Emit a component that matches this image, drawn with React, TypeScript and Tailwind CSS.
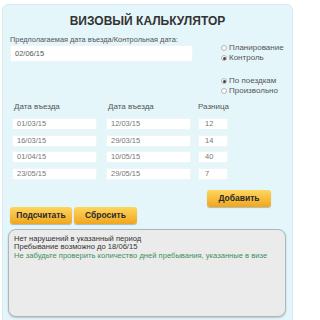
import React from "react";

type Trip = { from: string; to: string; diff: string };

const trips: Trip[] = [
    { from: "01/03/15", to: "12/03/15", diff: "12" },
    { from: "16/03/15", to: "29/03/15", diff: "14" },
    { from: "01/04/15", to: "10/05/15", diff: "40" },
    { from: "23/05/15", to: "29/05/15", diff: "7" },
];

function Radio({ label, checked }: { label: string; checked?: boolean }) {
    return (
        <div className="flex items-center h-[10px] gap-[2px]">
            <span className="w-[6px] h-[6px] rounded-full border border-[#b5b5b5] bg-white flex items-center justify-center">
                {checked && <span className="w-[3px] h-[3px] rounded-full bg-[#444]" />}
            </span>
            <span className="text-[8px] leading-[10px] text-[#555]">{label}</span>
        </div>
    );
}

function Field({ value, className }: { value: string; className: string }) {
    return (
        <div className={`h-[12px] bg-white border border-[#edf5f6] text-[7.5px] leading-[10px] text-[#777] ${className}`}>
            {value}
        </div>
    );
}

function YellowButton({ label, className }: { label: string; className: string }) {
    return (
        <button className={`rounded-[3px] bg-gradient-to-b from-[#fdd65c] to-[#f0a619] shadow-[0_1px_1px_rgba(0,0,0,0.25)] text-[8.5px] font-bold text-[#2b2b2b] ${className}`}>
            {label}
        </button>
    );
}

export default function App() {
    return (
        <div className="w-[298px] h-[320px] bg-white overflow-hidden pt-[4px] pl-[2px]" style={{ fontFamily: '"Liberation Sans", Arial, sans-serif' }}>
            <div className="w-[291px] h-[330px] rounded-[6px] bg-[#e4f6fa] border border-[#d8ecef] pt-[10px]">
                <h1 className="text-center text-[12px] leading-[12px] font-bold text-[#333]">ВИЗОВЫЙ КАЛЬКУЛЯТОР</h1>

                <div className="flex mt-[8px]">
                    <div className="ml-[7px] w-[183px]">
                        <div className="text-[7.4px] leading-[10px] text-[#555] whitespace-nowrap">Предполагаемая дата въезда/Контрольная дата:</div>
                        <div className="h-[17px] bg-white border border-[#edf5f6] text-[7.5px] leading-[15px] text-[#555] pl-[4px]">02/06/15</div>
                    </div>
                    <div className="ml-[28px] pt-[8px] flex flex-col">
                        <Radio label="Планирование" />
                        <Radio label="Контроль" checked />
                        <div className="h-[13px]" />
                        <Radio label="По поездкам" checked />
                        <Radio label="Произвольно" />
                    </div>
                </div>

                <div className="flex ml-[9px] mt-[6px] text-[8px] leading-[10px] text-[#555]">
                    <div className="w-[85px] pl-[2px]">Дата въезда</div>
                    <div className="w-[85px] ml-[9px] pl-[2px]">Дата въезда</div>
                    <div className="w-[30px] ml-[7px]">Разница</div>
                </div>

                <div className="flex flex-col gap-[4.5px] ml-[9px] mt-[6px]">
                    {trips.map((t) => (
                        <div key={t.from} className="flex">
                            <Field value={t.from} className="w-[85px] pl-[4px]" />
                            <Field value={t.to} className="w-[85px] ml-[9px] pl-[4px]" />
                            <Field value={t.diff} className="w-[30px] ml-[7px] pl-[6px]" />
                        </div>
                    ))}
                </div>

                <div className="flex justify-end pr-[21px] mt-[10px]">
                    <YellowButton label="Добавить" className="w-[64px] h-[17px]" />
                </div>

                <div className="flex gap-[2px] ml-[7px]">
                    <YellowButton label="Подсчитать" className="w-[62px] h-[17px]" />
                    <YellowButton label="Сбросить" className="w-[63px] h-[17px]" />
                </div>

                <div className="ml-[5px] mt-[5px] w-[278px] h-[88px] rounded-[8px] bg-[#ebebeb] border border-[#a9b9b9] shadow-[0_1px_2px_rgba(0,0,0,0.2)] px-[5px] pt-[5px] text-[7.6px] leading-[8.5px]">
                    <div className="text-[#333]">Нет нарушений в указанный период</div>
                    <div className="text-[#333]">Пребывание возможно до 18/06/15</div>
                    <div className="text-[#3d8f5f]">Не забудьте проверить количество дней пребывания, указанные в визе</div>
                </div>
            </div>
        </div>
    );
}
